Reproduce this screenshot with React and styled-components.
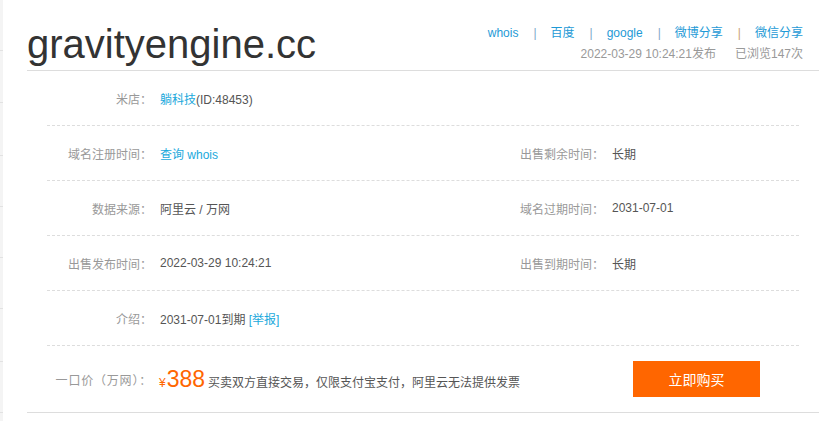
import React from "react";
import styled, { createGlobalStyle } from "styled-components";

const GlobalStyle = createGlobalStyle`
  html, body {
    margin: 0;
    padding: 0;
    background: #fff;
  }
  body {
    font-family: "Liberation Sans", Arial, "Noto Sans CJK SC", sans-serif;
    font-size: 12px;
    color: #555;
  }
`;

const Page = styled.div`
  display: flex;
  width: 831px;
  height: 421px;
  overflow: hidden;
`;

const SideStrip = styled.div`
  width: 3px;
  flex: none;
  background: #f4f4f4;
  display: flex;
  flex-direction: column;
`;

const StripItem = styled.div`
  height: ${(p) => p.h}px;
  flex: none;
  border-bottom: 1px solid #e2e2e2;
`;

const Main = styled.div`
  width: 792px;
  margin-left: 24px;
  border-bottom: 1px solid #ddd;
  align-self: flex-start;
`;

const Header = styled.div`
  display: flex;
  justify-content: space-between;
  align-items: flex-start;
  height: 70px;
  border-bottom: 1px solid #ddd;
  box-sizing: content-box;
`;

const Title = styled.h1`
  margin: 0;
  padding-top: 24px;
  font-family: "Liberation Sans", Arial, sans-serif;
  font-weight: normal;
  font-size: 40px;
  line-height: 40px;
  color: #333;
`;

const Meta = styled.div`
  padding-top: 23px;
  padding-right: 16px;
  text-align: right;
  line-height: 21px;
  font-size: 12px;
`;

const Links = styled.div`
  display: flex;
  justify-content: flex-end;
  align-items: center;
`;

const Link = styled.a`
  color: #1e9ad6;
  text-decoration: none;
`;

const Sep = styled.span`
  color: ${(p) => (p.last ? "#c9a27a" : "#7fa9c9")};
  margin: 0 14px 0 15px;
`;

const Info = styled.div`
  color: #999;
  span + span {
    margin-left: 19px;
  }
`;

const Rows = styled.div`
  margin: 0 20px;
`;

const Row = styled.div`
  display: grid;
  grid-template-columns: 105px 271px 181px 1fr;
  align-items: center;
  height: 54px;
  border-bottom: 1px dashed #ddd;
`;

const Label = styled.div`
  text-align: right;
  color: #999;
`;

const Value = styled.div`
  padding-left: 8px;
  color: #555;
`;

const Blue = styled.a`
  color: #1aa9dc;
  text-decoration: none;
`;

const PriceRow = styled.div`
  display: flex;
  align-items: center;
  height: 66px;
`;

const PriceLabel = styled(Label)`
  width: 105px;
  flex: none;
  letter-spacing: 0.8px;
`;

const PriceValue = styled.div`
  display: flex;
  align-items: baseline;
  padding-left: 7px;
  color: #555;
`;

const Yen = styled.span`
  color: #ff6600;
  font-size: 12px;
`;

const Amount = styled.span`
  color: #ff6600;
  font-size: 23px;
  margin: 0 3px 0 1px;
`;

const BuyButton = styled.button`
  margin-left: auto;
  margin-right: 39px;
  width: 127px;
  height: 36px;
  border: none;
  background: #ff6600;
  color: #fff;
  font-family: "Liberation Sans", Arial, "Noto Sans CJK SC", sans-serif;
  font-size: 14px;
  cursor: pointer;
`;

const strip = [50, 51, 52, 50, 50, 50, 52, 50];

export default function App() {
  return (
    <>
      <GlobalStyle />
      <Page>
        <SideStrip>
          {strip.map((h, i) => (
            <StripItem key={i} h={h} />
          ))}
        </SideStrip>
        <Main>
          <Header>
            <Title>gravityengine.cc</Title>
            <Meta>
              <Links>
                <Link href="#">whois</Link>
                <Sep>|</Sep>
                <Link href="#">百度</Link>
                <Sep>|</Sep>
                <Link href="#">google</Link>
                <Sep>|</Sep>
                <Link href="#">微博分享</Link>
                <Sep last>|</Sep>
                <Link href="#">微信分享</Link>
              </Links>
              <Info>
                <span>2022-03-29 10:24:21发布</span>
                <span>已浏览147次</span>
              </Info>
            </Meta>
          </Header>
          <Rows>
            <Row>
              <Label>米店：</Label>
              <Value>
                <Blue href="#">躺科技</Blue>(ID:48453)
              </Value>
            </Row>
            <Row>
              <Label>域名注册时间：</Label>
              <Value>
                <Blue href="#">查询 whois</Blue>
              </Value>
              <Label>出售剩余时间：</Label>
              <Value>长期</Value>
            </Row>
            <Row>
              <Label>数据来源：</Label>
              <Value>阿里云 / 万网</Value>
              <Label>域名过期时间：</Label>
              <Value>2031-07-01</Value>
            </Row>
            <Row>
              <Label>出售发布时间：</Label>
              <Value>2022-03-29 10:24:21</Value>
              <Label>出售到期时间：</Label>
              <Value>长期</Value>
            </Row>
            <Row>
              <Label>介绍：</Label>
              <Value>
                2031-07-01到期 <Blue href="#">[举报]</Blue>
              </Value>
            </Row>
            <PriceRow>
              <PriceLabel>一口价（万网）：</PriceLabel>
              <PriceValue>
                <Yen>¥</Yen>
                <Amount>388</Amount>
                <span>买卖双方直接交易，仅限支付宝支付，阿里云无法提供发票</span>
              </PriceValue>
              <BuyButton>立即购买</BuyButton>
            </PriceRow>
          </Rows>
        </Main>
      </Page>
    </>
  );
}
